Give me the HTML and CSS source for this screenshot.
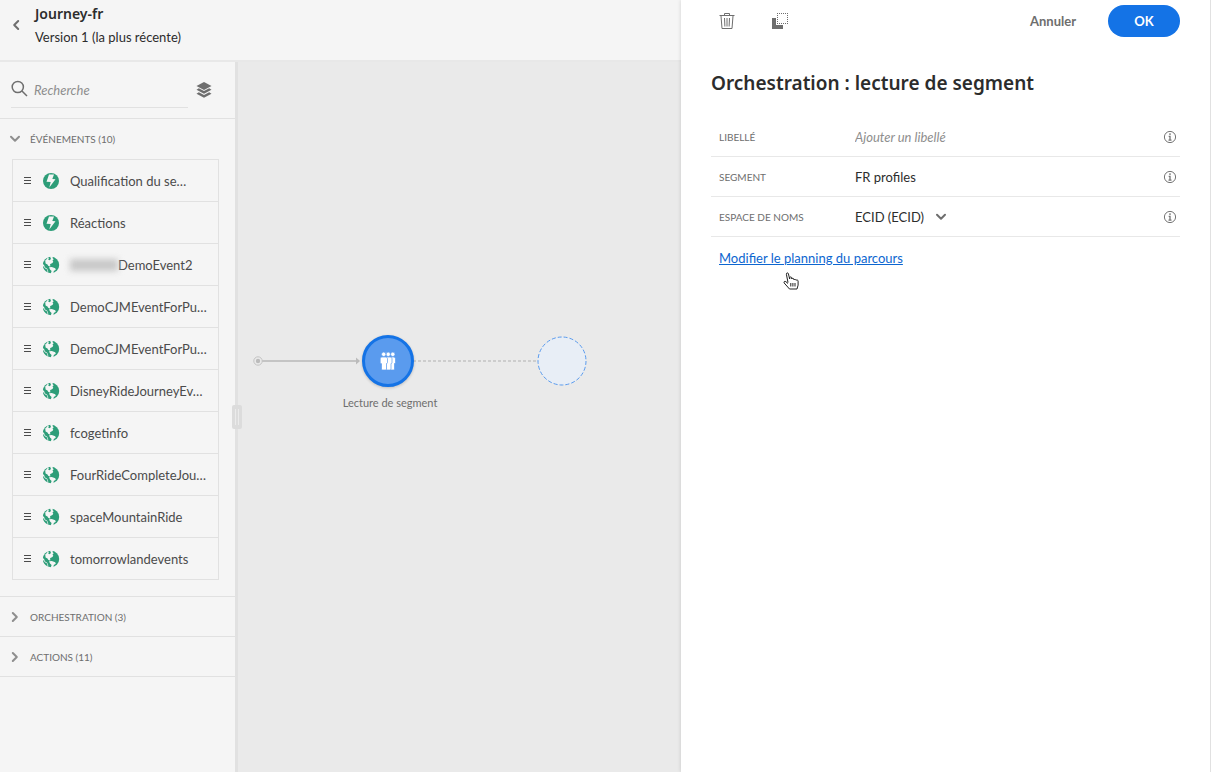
FILE: index.html
```
<!DOCTYPE html>
<html lang="fr">
<head>
<meta charset="utf-8">
<meta name="viewport" content="width=device-width, initial-scale=1">
<title>Journey-fr</title>
<link rel="stylesheet" href="styles.css">
</head>
<body>
<svg class="sprite" aria-hidden="true">
  <symbol id="handle" viewBox="0 0 8 7"><path d="M0 .5h7M0 3.500h7M0 6.500h7" stroke="#4b4b4b"/></symbol>
  <symbol id="bolt" viewBox="0 0 18 18"><circle cx="9" cy="9" r="8" fill="#2d9d78"/><path d="M7 2.500h5L10.300 7l3.200.3L7.300 15.500l1.400-5.500-4.200-.3z" fill="#f5f5f5"/></symbol>
  <symbol id="globe" viewBox="0 0 18 18"><circle cx="9" cy="9" r="8.200" fill="#2d9d78"/><path fill="#f5f5f5" d="M5.500 0l1.300 2.200-.5 1.500 1.200.5L9 3 8.200 1 8.500 0h2l.2 2.200 1 1.100-1.200 1.300.8 1.200-.9 1.300-2 1-.6 1.200 1 .8-1.200.5-1.400-.9-.7-1.100-1.900-1.200L3.200 4.500 5.200 2.800z"/><path fill="#f5f5f5" d="M0 7l2.200 2.300.6 2 2.400 1.500 1 2.200-.2 3H0zM7 11.300l2.800-.2 3.400 1.200.6 1.400-2 1.300-.6 3H8.600l1-3-1.600-1.500z"/><path fill="#2d9d78" d="M.9 9.800l2 2.400 2.200 1.300.6 3C3 15.300 1 12.900.9 9.800z"/></symbol>
  <symbol id="chevron" viewBox="0 0 12 12"><path d="M2 3.800l4 4 4-4" fill="none" stroke="currentColor" stroke-width="2" stroke-linecap="round" stroke-linejoin="round"/></symbol>
  <symbol id="info" viewBox="0 0 14 14"><circle cx="7" cy="7" r="5.600" fill="none" stroke="#747474"/><path d="M7 3.300v1.600M5.700 6.300H7v4M5.500 10.200h3" fill="none" stroke="#747474" stroke-width="1.300"/></symbol>
</svg>
<div class="app">
  <div class="workspace">
    <header class="header">
      <button class="icon-button back" aria-label="Retour"><svg class="chevron chevron-left"><use href="#chevron"/></svg></button>
      <div>
        <h1 class="title">Journey-fr</h1>
        <p class="version">Version 1 (la plus récente)</p>
      </div>
    </header>
    <div class="body">
      <aside class="sidebar">
        <div class="search-row">
          <label class="search">
            <svg class="search-icon" viewBox="0 0 18 18"><circle cx="6.800" cy="6" r="5.600"/><path d="M11 10l5 5"/></svg>
            <input class="search-input" type="text" placeholder="Recherche" aria-label="Recherche">
          </label>
          <button class="icon-button" aria-label="Calques"><svg class="layers" viewBox="0 0 16 16"><path d="M8 0l7.500 4L8 8 .5 4zM2.800 6.300L8 9l5.200-2.700 2.300 1.400L8 11.700.5 7.700zM2.800 10.300L8 13l5.200-2.700 2.300 1.400L8 15.700.5 11.700z"/></svg></button>
        </div>
        <section class="section">
          <button class="section-head"><svg class="chevron"><use href="#chevron"/></svg>ÉVÉNEMENTS (10)</button>
          <ul class="events">
            <li class="event"><svg class="handle"><use href="#handle"/></svg><svg class="event-icon"><use href="#bolt"/></svg><span>Qualification du se…</span></li>
            <li class="event"><svg class="handle"><use href="#handle"/></svg><svg class="event-icon"><use href="#bolt"/></svg><span>Réactions</span></li>
            <li class="event"><svg class="handle"><use href="#handle"/></svg><svg class="event-icon"><use href="#globe"/></svg><span class="masked"><i class="mask"></i>DemoEvent2</span></li>
            <li class="event"><svg class="handle"><use href="#handle"/></svg><svg class="event-icon"><use href="#globe"/></svg><span>DemoCJMEventForPu…</span></li>
            <li class="event"><svg class="handle"><use href="#handle"/></svg><svg class="event-icon"><use href="#globe"/></svg><span>DemoCJMEventForPu…</span></li>
            <li class="event"><svg class="handle"><use href="#handle"/></svg><svg class="event-icon"><use href="#globe"/></svg><span>DisneyRideJourneyEv…</span></li>
            <li class="event"><svg class="handle"><use href="#handle"/></svg><svg class="event-icon"><use href="#globe"/></svg><span>fcogetinfo</span></li>
            <li class="event"><svg class="handle"><use href="#handle"/></svg><svg class="event-icon"><use href="#globe"/></svg><span>FourRideCompleteJou…</span></li>
            <li class="event"><svg class="handle"><use href="#handle"/></svg><svg class="event-icon"><use href="#globe"/></svg><span>spaceMountainRide</span></li>
            <li class="event"><svg class="handle"><use href="#handle"/></svg><svg class="event-icon"><use href="#globe"/></svg><span>tomorrowlandevents</span></li>
          </ul>
        </section>
        <section class="section"><button class="section-head"><svg class="chevron chevron-right"><use href="#chevron"/></svg>ORCHESTRATION (3)</button></section>
        <section class="section"><button class="section-head"><svg class="chevron chevron-right"><use href="#chevron"/></svg>ACTIONS (11)</button></section>
        <div class="resizer"></div>
      </aside>
      <main class="canvas">
        <svg class="links" width="360" height="12" viewBox="0 0 360 12"><g fill="none" stroke="#c4c4c4"><circle cx="6" cy="6" r="4.200"/><path d="M10 6h94" stroke-width="2"/><path d="M161 6h124" stroke="#cdcdcd" stroke-width="2" stroke-dasharray="3 2"/></g><circle cx="6" cy="6" r="2.200" fill="#bbb"/><path d="M104 2.500l4 3.500-4 3.500z" fill="#bbb"/></svg>
        <div class="node">
          <svg class="people" viewBox="0 0 16 18"><g stroke="#5a9bee" stroke-width=".7"><path d="M10 5h3.500c1.300 0 2 .8 2 2v3.500c0 .7-.4 1-1 1V17q0 1-1 1H10z"/><circle cx="12.800" cy="2.300" r="2.200"/><path d="M6 5h4c1.300 0 2 .8 2 2v3.500c0 .7-.4 1-1 1V17q0 1-1 1H6z"/><circle cx="8.200" cy="2.300" r="2.200"/><path d="M2 5h3.500c1.300 0 2 .8 2 2v3.500c0 .7-.4 1-1 1V17q0 1-1 1H2.500q-1 0-1-1v-5.300C.5 11.500.2 11 .2 10.500V7c0-1.200.6-2 1.800-2z"/><circle cx="3.700" cy="2.300" r="2.200"/></g></svg>
        </div>
        <div class="node-label">Lecture de segment</div>
        <svg class="drop" viewBox="0 0 50 50"><circle cx="25" cy="25" r="24"/></svg>
      </main>
    </div>
  </div>
  <aside class="panel">
    <div class="toolbar">
      <button class="icon-button" aria-label="Supprimer"><svg class="tool" viewBox="0 0 16 18"><path d="M.5 3.500h15M5.500 3V1.500h5V3M2 4l1 12.500h10L14 4M5.500 6l.4 8.500M8 6v8.500M10.500 6l-.4 8.500"/></svg></button>
      <button class="icon-button" aria-label="Dupliquer"><svg class="duplicate" viewBox="0 0 18 18"><path d="M1 6h4v7h7v4H1z" fill="#6e6e6e"/><path d="M6 1.500h11M6 11.500h11M6.500 3v8M16.500 3v8" fill="none" stroke="#6e6e6e" stroke-dasharray="1 1"/></svg></button>
      <button class="cancel">Annuler</button>
      <button class="ok">OK</button>
    </div>
    <h2 class="panel-title">Orchestration : lecture de segment</h2>
    <div class="fields">
      <div class="field"><label class="field-label" for="libelle">LIBELLÉ</label><div class="field-value"><input class="text-input" id="libelle" type="text" placeholder="Ajouter un libellé"></div><svg class="info"><use href="#info"/></svg></div>
      <div class="field"><span class="field-label">SEGMENT</span><div class="field-value">FR profiles</div><svg class="info"><use href="#info"/></svg></div>
      <div class="field"><label class="field-label" for="ns">ESPACE DE NOMS</label><div class="field-value"><select class="select" id="ns"><option>ECID (ECID)</option></select><svg class="chevron select-chevron"><use href="#chevron"/></svg></div><svg class="info"><use href="#info"/></svg></div>
    </div>
    <a class="schedule" href="#">Modifier le planning du parcours</a>
    <svg class="cursor" viewBox="0 0 16 18"><path d="M5 10.500L3.400 2.300C3.200.6 5 .3 5.400 1.800L6.700 7V5.600c.2-1 1.800-.9 2 .2V7c.2-1 2-.9 2.200.2V8c.3-1 2-.7 2.200.3.400-.8 2-.4 2 .8v4L14 17H6.500L1.200 11c-.8-1.300.7-2.300 1.700-1.300L5 11.500M7.800 11v3.500M9.900 11v3.500M12 11v3.500"/></svg>
  </aside>
</div>
</body>
</html>
```
FILE: styles.css
```
* { box-sizing: border-box; }
body { margin: 0; font-family: Lato, "Noto Sans", sans-serif; font-size: 13px; line-height: 20px; color: #4b4b4b; background: #f5f5f5; }
button, input, select { font: inherit; color: inherit; border: 0; background: none; padding: 0; margin: 0; }
h1, h2, p, ul { margin: 0; padding: 0; }
svg { display: block; flex: none; }
.sprite { position: absolute; width: 0; height: 0; }
.app { display: flex; min-height: 100vh; }
.workspace { flex: 1; min-width: 0; display: flex; flex-direction: column; }
.header { display: flex; gap: 12px; height: 62px; padding: 4px 8px; border-bottom: 2px solid #e8e8e8; color: #2c2c2c; }
.icon-button { display: flex; align-items: center; justify-content: center; }
.back { width: 15px; height: 42px; color: #6e6e6e; }
.title { font-family: "Noto Sans", sans-serif; font-size: 14px; line-height: 20px; font-weight: 600; }
.version { padding-top: 3px; }
.chevron { width: 12px; height: 12px; }
.chevron-left { transform: rotate(90deg); }
.chevron-right { transform: rotate(-90deg); }
.body { flex: 1; display: flex; }
.sidebar { position: relative; z-index: 1; width: 238px; flex: none; border-right: 3px solid #e1e1e1; }
.search-row { display: flex; align-items: center; gap: 8px; height: 57px; padding: 0 23px 0 11px; border-bottom: 1px solid #e1e1e1; }
.search { flex: 1; display: flex; align-items: center; gap: 5px; height: 36px; border-bottom: 1px solid #e1e1e1; }
.search-input { min-width: 0; width: 100%; }
.search-icon { width: 18px; height: 18px; fill: none; stroke: #6e6e6e; stroke-width: 1.5; overflow: visible; }
input::placeholder { color: #8e8e8e; opacity: 1; font-style: italic; }
.layers { width: 16px; height: 16px; fill: #6e6e6e; }
.search-row .icon-button { width: 16px; }
.section { border-bottom: 1px solid #e1e1e1; }
.section-head { display: flex; align-items: center; gap: 9px; width: 100%; height: 39px; padding: 0 9px; font-size: 10px; color: #6e6e6e; }
.section-head .chevron { color: #8e8e8e; }
.events { list-style: none; margin: 1px 16px 16px 12px; border: 1px solid #e1e1e1; }
.event { display: flex; align-items: center; height: 42px; padding-left: 11px; color: #4b4b4b; white-space: nowrap; }
.event:first-child { height: 41px; }
.event + .event { border-top: 1px solid #e1e1e1; }
.handle { width: 8px; height: 7px; margin-right: 10px; }
.event-icon { width: 18px; height: 18px; margin-right: 10px; }
.masked { display: flex; align-items: center; }
.mask { width: 48px; height: 12px; background: #c8c8c8; filter: blur(3px); }
.resizer { position: absolute; right: -7px; top: 343px; width: 10px; height: 24px; border-radius: 2px; border: solid #dcdcdc; border-width: 4px 3px; background: linear-gradient(90deg, #ebebeb 1px, #dcdcdc 1px 3px, #ebebeb 3px) padding-box; }
.canvas { position: relative; flex: 1; background: #eaeaea; }
.links { position: absolute; left: 14px; top: 293px; }
.node { position: absolute; left: 124px; top: 273px; width: 52px; height: 52px; display: flex; align-items: center; justify-content: center; border: 3px solid #1473e6; border-radius: 50%; background: #5a9bee; box-shadow: 0 1px 3px #00000033; }
.people { width: 16px; height: 18px; fill: #fff; }
.node-label { position: absolute; left: 152px; top: 331px; transform: translateX(-50%); font-size: 11px; white-space: nowrap; color: #6e6e6e; }
.drop { position: absolute; left: 299px; top: 274px; width: 50px; height: 50px; fill: #e8eef6; stroke: #5a9bee; stroke-dasharray: 4 2; }
.panel { position: relative; z-index: 1; width: 530px; flex: none; padding: 5px 30px 0; background: #fff; border-right: 1px solid #e1e1e1; box-shadow: 0 0 4px #00000026; }
.toolbar { display: flex; align-items: center; height: 32px; padding-left: 8px; }
.tool { width: 16px; height: 18px; fill: none; stroke: #6e6e6e; }
.duplicate { width: 18px; height: 18px; margin-left: 36px; }
.cancel { margin-left: auto; font-weight: 700; color: #6e6e6e; }
.ok { width: 72px; height: 32px; margin-left: 32px; border-radius: 16px; background: #1473e6; color: #fff; font-weight: 700; }
.panel-title { margin-top: 32px; font-family: "Noto Sans", sans-serif; font-size: 19px; line-height: 28px; font-weight: 600; color: #2c2c2c; white-space: nowrap; }
.fields { margin-top: 20px; }
.field { display: flex; align-items: center; height: 40px; padding: 0 3px 0 8px; border-bottom: 1px solid #e8e8e8; }
.field-label { width: 136px; flex: none; font-size: 10px; color: #6e6e6e; }
.field-value { flex: 1; display: flex; align-items: center; color: #2c2c2c; }
.text-input { width: 200px; }
.info { width: 14px; height: 14px; }
.select { appearance: none; }
.select-chevron { margin-left: 10px; color: #6e6e6e; }
.schedule { display: inline-block; margin: 11px 0 0 8px; color: #0d66d0; }
.cursor { position: absolute; left: 102px; top: 272px; width: 16px; height: 18px; fill: #fff; stroke: #222; }
```
